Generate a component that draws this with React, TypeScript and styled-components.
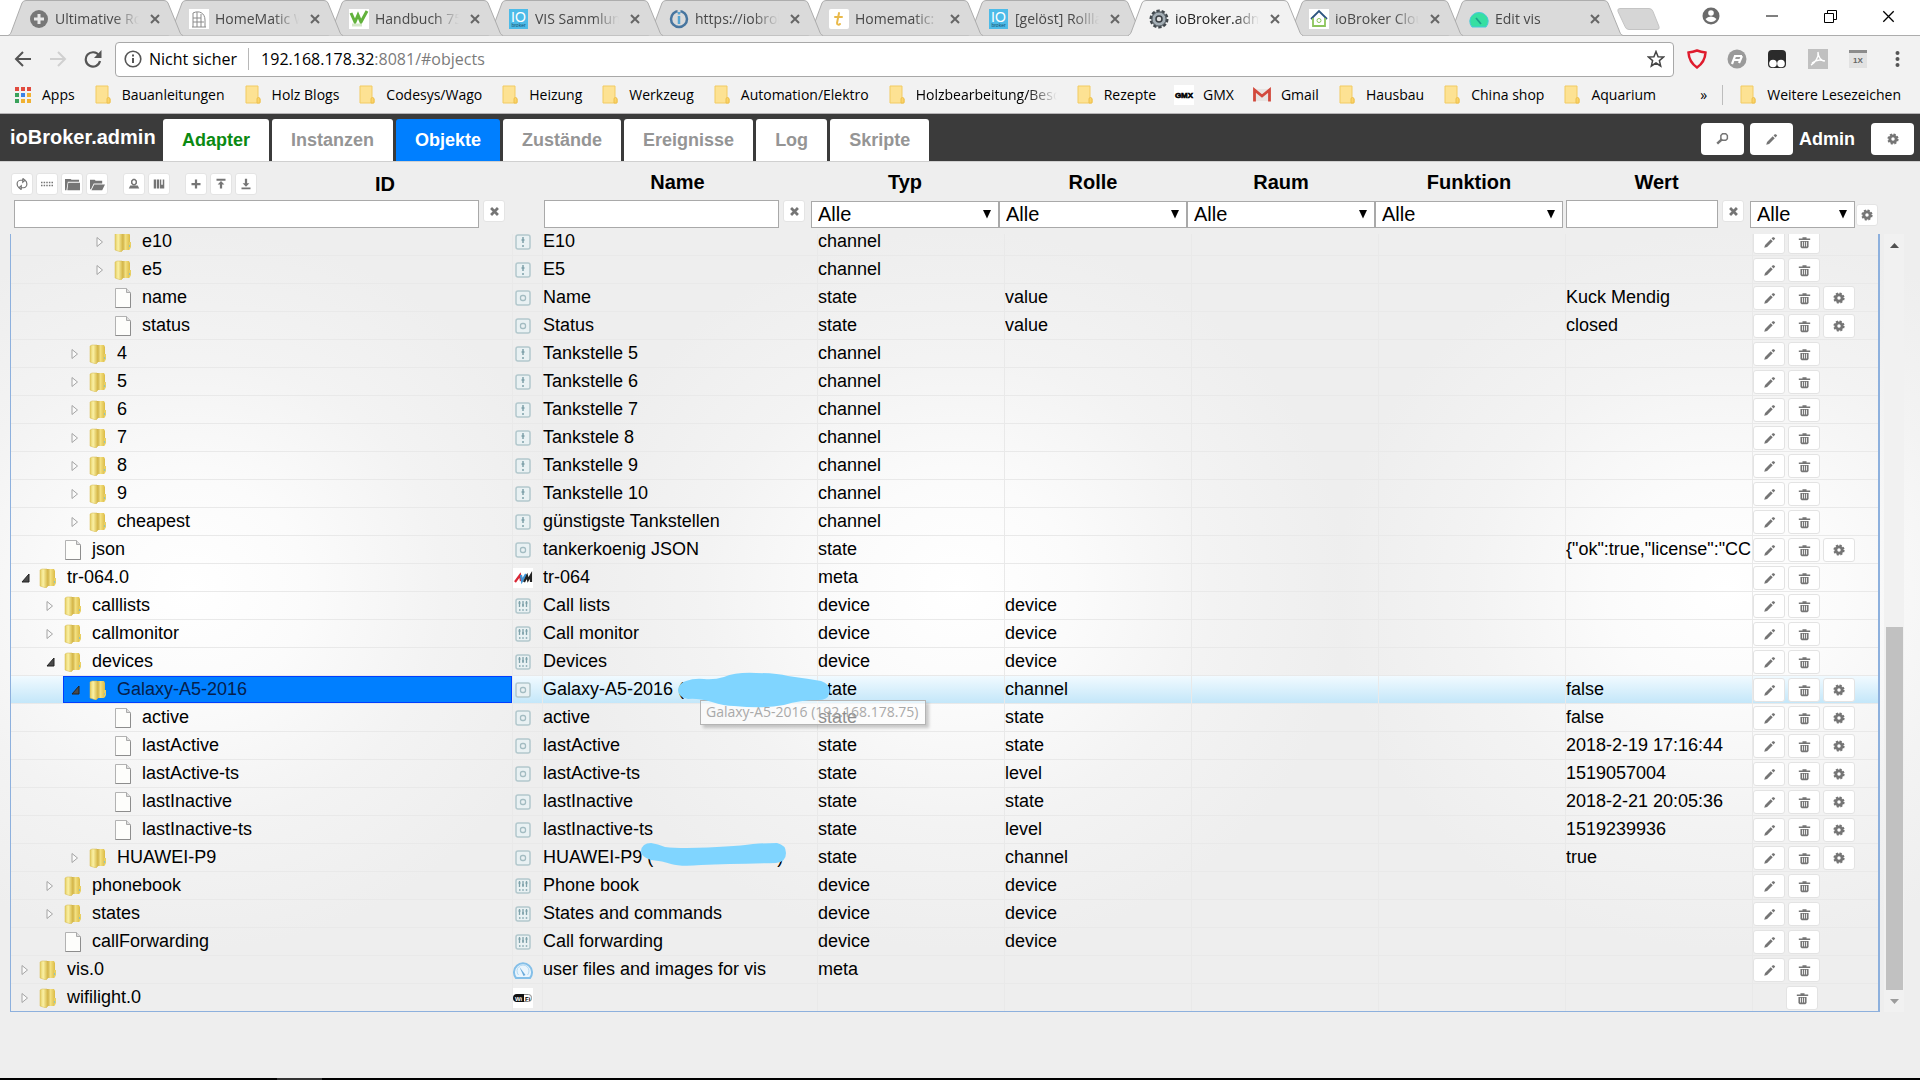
import React from "react";
import styled, { createGlobalStyle, css } from "styled-components";

const ui = '"Open Sans", "Noto Sans", sans-serif';
const arial = '"Liberation Sans", Arial, sans-serif';

const Global = createGlobalStyle`
  * { box-sizing: border-box; }
  html, body { margin: 0; height: 100%; background: #eeeeee; }
  body { font-family: ${arial}; font-size: 18px; color: #000; overflow: hidden; }
  button { font: inherit; color: inherit; padding: 0; border: 0; background: none; }
  a { color: inherit; text-decoration: none; }
  svg { display: block; flex: none; }
`;

const Page = styled.div`
  display: flex;
  flex-direction: column;
  min-height: 100vh;
`;

/* ---------- browser chrome ---------- */

const TabStrip = styled.div`
  display: flex;
  height: 36px;
  padding-left: 8px;
  background: #fff;
  border-bottom: 1px solid #adadad;
  font-family: ${ui};
  font-size: 14px;
`;

const TabBox = styled.div<{ $active?: boolean; $z: number }>`
  position: relative;
  z-index: ${(p) => (p.$active ? 30 : p.$z)};
  display: flex;
  align-items: center;
  gap: 6px;
  width: 175px;
  height: 36px;
  margin-right: -15px;
  padding: 1px 18px 0 21px;
  color: ${(p) => (p.$active ? "#222" : "#484848")};
`;

const TabShape = styled.svg`
  position: absolute;
  inset: 0;
  z-index: -1;
`;

const TabTitle = styled.a`
  flex: 1;
  height: 20px;
  line-height: 20px;
  overflow: hidden;
  white-space: nowrap;
  mask-image: linear-gradient(90deg, #000 70%, transparent 100%);
`;

const CloseTab = styled.button`
  display: grid;
  place-items: center;
  width: 20px;
  height: 20px;
`;

const NewTab = styled.button`
  width: 44px;
  height: 22px;
  margin: 8px 0 0 9px;
`;

const WindowControls = styled.div`
  display: flex;
  align-items: center;
  margin-left: auto;
  padding-right: 3px;
  height: 32px;
`;

const WindowButton = styled.button<{ $wide?: boolean }>`
  display: grid;
  place-items: center;
  width: ${(p) => (p.$wide ? 64 : 58)}px;
  height: 32px;
`;

const NavBar = styled.div`
  display: flex;
  align-items: center;
  height: 43px;
  padding: 3px 12px 0 8px;
  background: #f2f2f2;
  font-family: ${ui};
  font-size: 16px;
`;

const NavButton = styled.button`
  display: grid;
  place-items: center;
  width: 30px;
  height: 30px;
  margin-right: 5px;
`;

const Omnibox = styled.div`
  display: flex;
  align-items: center;
  flex: 1;
  height: 35px;
  margin-left: 2px;
  padding: 0 8px;
  background: #fff;
  border: 1px solid #a8a8a8;
  border-radius: 4px;
`;

const Secure = styled.span`
  margin-left: 7px;
  padding-right: 11px;
  border-right: 1px solid #b8b8b8;
`;

const Url = styled.div`
  flex: 1;
  padding-left: 12px;
  color: #7b7b7b;
  b { font-weight: 400; color: #000; }
`;

const Extensions = styled.div`
  display: flex;
  align-items: center;
  justify-content: space-between;
  width: 234px;
  padding-left: 13px;
`;

const ExtButton = styled.button`
  display: grid;
  place-items: center;
  width: 20px;
  height: 24px;
`;

const Bookmarks = styled.nav`
  display: flex;
  align-items: center;
  height: 35px;
  padding: 0 19px 3px 13px;
  gap: 18px;
  background: #f2f2f2;
  border-bottom: 1px solid #b6b4b6;
  font-family: ${ui};
  font-size: 14px;
`;

const Bookmark = styled.a<{ $faded?: boolean }>`
  display: flex;
  align-items: center;
  gap: 9px;
  white-space: nowrap;
  ${(p) =>
    p.$faded &&
    css`
      width: 170px;
      overflow: hidden;
      mask-image: linear-gradient(90deg, #000 82%, transparent 100%);
    `}
`;

const BookmarkEnd = styled.div`
  display: flex;
  align-items: center;
  gap: 15px;
  margin-left: auto;
`;

const Divider = styled.span`
  width: 1px;
  height: 20px;
  background: #bdbdbd;
`;

/* ---------- ioBroker header ---------- */

const AdminBar = styled.header`
  display: flex;
  height: 48px;
  padding: 0 6px 0 10px;
  background: #3b3b3b;
  border-bottom: 1px solid #d0d0d0;
  font-weight: 700;
`;

const Brand = styled.h1`
  margin: 0;
  width: 153px;
  font-size: 20px;
  line-height: 46px;
  color: #fff;
`;

const MenuTabs = styled.nav`
  display: flex;
  gap: 3px;
  padding-top: 5px;
`;

const MenuTab = styled.a<{ $tone?: "green" | "active" }>`
  padding: 0 19px;
  line-height: 42px;
  border-radius: 3px 3px 0 0;
  background: ${(p) => (p.$tone === "active" ? "#007fff" : "#fff")};
  color: ${(p) => (p.$tone === "active" ? "#fff" : p.$tone === "green" ? "#0b8a12" : "#959595")};
`;

const AdminTools = styled.div`
  display: flex;
  align-items: center;
  gap: 6px;
  margin-left: auto;
  padding-top: 3px;
  color: #fff;
`;

const AdminButton = styled.button`
  display: grid;
  place-items: center;
  width: 43px;
  height: 32px;
  background: #fff;
  border-radius: 4px;
`;

const User = styled.span`
  padding-right: 10px;
`;

/* ---------- object browser ---------- */

const Main = styled.main`
  flex: 1;
  padding: 6px 0 0;
  background: radial-gradient(390px 360px at 50% 428px, #ffffff 0, #fbfbfb 30%, #f3f3f3 65%, #eeeeee 100%) -194px 0 / 768px
    100% repeat-x;
`;

const FilterHead = styled.div`
  display: grid;
  grid-template-columns: 1fr 267px repeat(4, 188px) 187px 128px;
  grid-template-rows: 32px 28px;
  padding: 0 42px 6px 14px;
  font-size: 20px;
`;

const HeadTitle = styled.div`
  flex: 1;
  line-height: 29px;
  text-align: center;
  font-weight: 700;
`;

const IdHead = styled.div`
  display: flex;
  align-items: center;
  padding-right: 31px;
  margin-left: -3px;
`;

const ToolGroup = styled.div`
  display: flex;
  gap: 3px;
  margin-right: 15px;
  &:nth-of-type(3) { margin-right: 0; }
`;

const MiniButton = styled.button`
  display: grid;
  place-items: center;
  flex: none;
  width: 22px;
  height: 22px;
  background: #fff;
  border: 1px solid #e4e4e4;
  border-radius: 3px;
`;

const FilterCell = styled.div<{ $inset?: boolean; $end?: number }>`
  display: flex;
  gap: 4px;
  padding-left: ${(p) => (p.$inset ? 3 : 0)}px;
  padding-right: ${(p) => p.$end ?? 0}px;
`;

const TextFilter = styled.input`
  flex: 1;
  min-width: 0;
  height: 28px;
  padding: 0 6px;
  font: inherit;
  background: #fff;
  border: 1px solid #a9a9a9;
`;

const SelectWrap = styled.label`
  position: relative;
  align-self: end;
  flex: 1;
  height: 27px;
  svg { position: absolute; right: 8px; top: 9px; pointer-events: none; }
`;

const Select = styled.select`
  appearance: none;
  display: block;
  width: 100%;
  height: 27px;
  padding: 0 6px 1px;
  font: inherit;
  line-height: 24px;
  color: #000;
  background: #fff;
  border: 1px solid #a9a9a9;
  border-radius: 0;
`;

const GearSlot = styled.div`
  align-self: end;
  display: flex;
  margin: 0 0 2px -3px;
`;

const Browser = styled.div`
  display: flex;
  height: calc(100vh - 302px);
  padding: 0 16px 0 10px;
`;

const Viewport = styled.div`
  display: flex;
  flex-direction: column;
  justify-content: flex-end;
  flex: 1;
  overflow: hidden;
  border: solid #8db0dd;
  border-width: 0 2px 1px 1px;
`;

const Tree = styled.table`
  flex: none;
  width: 100%;
  table-layout: fixed;
  border-collapse: separate;
  border-spacing: 0;
`;

const Row = styled.tr<{ $selected?: boolean }>`
  height: 28px;
  &:last-child { height: 27px; }
  ${(p) =>
    p.$selected &&
    css`
      background: linear-gradient(#f1faff, #c2e6f9);
      box-shadow: 0 -1px 0 #b4def2;
    `}
`;

const Cell = styled.td<{ $plain?: boolean; $above?: boolean }>`
  position: relative;
  z-index: ${(p) => (p.$above ? 2 : "auto")};
  height: inherit;
  padding: 0;
  line-height: 26px;
  vertical-align: top;
  white-space: nowrap;
  overflow: ${(p) => (p.$above ? "visible" : "hidden")};
  border-left: ${(p) => (p.$plain ? "0" : "1px solid #e9e9e9")};
  border-bottom: 1px solid #e9e9e9;
  tr:last-child > & { border-bottom: 0; }
`;

const NodeLine = styled.div<{ $level: number }>`
  display: flex;
  align-items: center;
  height: 27px;
  padding-left: ${(p) => p.$level * 25 + 2}px;
`;

const NodeTitle = styled.div<{ $selected?: boolean }>`
  display: flex;
  align-items: center;
  flex: 1;
  height: 27px;
  line-height: 25px;
  padding-left: 3px;
  border: 1px solid transparent;
  ${(p) =>
    p.$selected &&
    css`
      background: #007fff;
      border-color: #003eff;
      color: #06204c;
    `}
`;

const Expander = styled.button`
  display: grid;
  place-items: center;
  width: 16px;
  height: 20px;
  margin-right: 5px;
`;

const NodeSpace = styled.span`
  width: 21px;
`;

const NodeText = styled.span`
  margin-left: 9px;
`;

const TypeIcon = styled.div`
  display: grid;
  place-items: center;
  height: 27px;
  padding-right: 9px;
`;

const Actions = styled.div`
  display: flex;
  gap: 3px;
  height: 27px;
  padding-top: 2px;
`;

const ActionSpace = styled.span`
  width: 30px;
`;

const ActionButton = styled.button`
  display: grid;
  place-items: center;
  width: 32px;
  height: 24px;
  background: #fff;
  border: 1px solid #e3e3e3;
  border-radius: 3px;
`;

const Smudge = styled.svg<{ $x: number; $y: number }>`
  position: absolute;
  left: ${(p) => p.$x}px;
  top: ${(p) => p.$y}px;
`;

const HiddenPart = styled.span`
  display: inline-block;
  width: 124px;
`;

const Tooltip = styled.div`
  position: absolute;
  left: 157px;
  top: 24px;
  height: 25px;
  padding: 0 7px 0 5px;
  line-height: 22px;
  font-family: ${ui};
  font-size: 14px;
  color: #a9a9a9;
  background: rgba(255, 255, 255, 0.55);
  border: 1px solid #b4b4b4;
  box-shadow: 3px 3px 3px rgba(0, 0, 0, 0.2);
`;

const Scroll = styled.div`
  display: flex;
  flex-direction: column;
  align-items: center;
  width: 20px;
  margin-left: 4px;
  background: #f1f1f1;
`;

const ScrollArrow = styled.button`
  display: grid;
  place-items: center;
  width: 17px;
  height: 22px;
`;

const Track = styled.div`
  display: flex;
  align-items: flex-end;
  flex: 1;
`;

const Thumb = styled.div`
  width: 17px;
  height: 49.5%;
  background: #c1c1c1;
`;

const TaskbarEdge = styled.div`
  height: 2px;
  background: linear-gradient(90deg, #000 277px, #333 277px, #333 322px, #000 322px);
`;

/* ---------- icons ---------- */

const Cross = ({ s = 9, c = "#666", w = 2 }: { s?: number; c?: string; w?: number }) => (
  <svg width={s} height={s} viewBox="0 0 10 10" stroke={c} strokeWidth={w} fill="none">
    <path d="M1 1l8 8M9 1l-8 8" />
  </svg>
);

const FolderMark = () => (
  <svg width="20" height="20" viewBox="0 0 20 20">
    <path d="M3 1h12v12l2 1v4H3z" fill="#fde293" stroke="#f2cb62" />
    <path d="M14 18v-4a1.500 1.500 0 0 1 3 0v3a1 1 0 0 1-1 1z" fill="#fbd469" stroke="#edc04f" />
  </svg>
);

const AppsMark = () => (
  <svg width="20" height="20" viewBox="0 0 20 20">
    {["#e14b3e", "#e14b3e", "#e14b3e", "#3aa25b", "#3b82e6", "#f0b132", "#3aa25b", "#f0b132", "#f0b132"].map((c, i) => (
      <rect key={i} x={2 + (i % 3) * 6} y={2 + Math.floor(i / 3) * 6} width="4" height="4" fill={c} />
    ))}
  </svg>
);

const GmxMark = () => (
  <svg width="20" height="20" viewBox="0 0 20 20">
    <rect width="20" height="20" fill="#fff" />
    <text x="10" y="13" fontSize="8" fontWeight="900" fontFamily="Liberation Sans" textAnchor="middle" stroke="#000" strokeWidth=".6">GMX</text>
  </svg>
);

const GmailMark = () => (
  <svg width="20" height="20" viewBox="0 0 20 20">
    <path d="M3 4h14v12H3z" fill="#e8e4e2" />
    <path d="M2.500 16.500V5l7.500 6 7.500-6v11.500" fill="none" stroke="#d2493c" strokeWidth="2.800" />
  </svg>
);

const Fav = ({ kind }: { kind: string }) => (
  <svg width="20" height="20" viewBox="0 0 20 20">
    {kind === "plus" && (<><circle cx="10" cy="10" r="9" fill="#777" /><path d="M10 5v10M5 10h10" stroke="#e8e8e8" strokeWidth="3" /></>)}
    {kind === "homematic" && (<><rect width="20" height="20" fill="#fff" /><path d="M4 18V4M4 4c6-3 12 0 12 7v7M8 18V3M12 18V5M4 9h8M4 13h11M3 18h14" fill="none" stroke="#8a8a8a" /></>)}
    {kind === "handbuch" && (<><rect width="20" height="20" fill="#fff" /><path d="M2 4l4 9 3-7 3 7 6-11" fill="none" stroke="#62b23c" strokeWidth="3" /><path d="M3 16h10" stroke="#d5e8c9" strokeWidth="3" /></>)}
    {kind === "io" && (<><rect width="19" height="20" fill="#4dbbe8" /><text x="9.500" y="13" fontSize="14" textAnchor="middle" fill="#fff" fontFamily="Liberation Sans">IO</text><text x="9.500" y="18" fontSize="5" textAnchor="middle" fill="#164f6d" fontFamily="Liberation Sans">broker</text></>)}
    {kind === "info" && (<><circle cx="10" cy="10" r="8" fill="none" stroke="#47759f" strokeWidth="2.500" /><path d="M10 0v3" stroke="#dadada" strokeWidth="3" /><path d="M10 7v8M10 3v2.500" stroke="#55a4d2" strokeWidth="2.500" /></>)}
    {kind === "tapatalk" && (<><rect width="20" height="20" rx="2" fill="#fff" /><path d="M10 4L8 14c0 2 2 2 3 1M6 8h7" fill="none" stroke="#e9b949" strokeWidth="2" strokeLinecap="round" /></>)}
    {kind === "gear" && (<><circle cx="10" cy="10" r="8" fill="#8d969d" stroke="#41474c" strokeWidth="3" strokeDasharray="3.200 1.800" /><circle cx="10" cy="10" r="7" fill="#a5afb6" stroke="#5a6268" /><circle cx="10" cy="10" r="3" fill="#e0e0e0" stroke="#3a3f44" strokeWidth="1.500" /></>)}
    {kind === "cloud" && (<><rect width="20" height="20" fill="#fff" /><path d="M2 10l8-8 8 8" fill="none" stroke="#2d5580" strokeWidth="1.800" /><path d="M4 9v8h12V9" fill="none" stroke="#8cc55b" strokeWidth="1.800" /><circle cx="10" cy="11.500" r="2" fill="none" stroke="#8cc55b" /></>)}
    {kind === "vis" && (<><path d="M3 18A9.200 8.800 0 1 1 17 18z" fill="#36dfa2" stroke="#46c8dc" /><path d="M7 9l5 6" stroke="#1c9f8c" strokeWidth="1.800" /></>)}
  </svg>
);

const Glyph = ({ name, size = 14, color = "#757575" }: { name: string; size?: number; color?: string }) => (
  <svg width={size} height={size} viewBox="0 0 16 16" fill={color} stroke="none">
    {name === "pencil" && <path d="M1.500 14.500l1-3.500 7-7 2.500 2.500-7 7zM10.500 3l1.500-1.500h1.500L15 3l-2 2.500z" />}
    {name === "trash" && (<><path d="M1 3h4.500V1.500h5V3H15v2H1z" /><path d="M3 6h10v7.500L11.500 15h-7L3 13.500zM5 7v6h1V7zm2.500 0v6h1V7zM10 7v6h1V7z" fillRule="evenodd" /></>)}
    {name === "gear" && (<><circle cx="8" cy="8" r="6" fill="none" stroke={color} strokeWidth="3" strokeDasharray="2.700 2.010" /><circle cx="8" cy="8" r="4.200" fill="none" stroke={color} strokeWidth="3.800" /></>)}
    {name === "search" && (<><path d="M6 3l2-2h4l2 2v4l-2 2H8L6 7z" fill="none" stroke={color} strokeWidth="1.800" /><path d="M7 8l-5.500 5" stroke={color} strokeWidth="3" /></>)}
    {name === "close" && <path d="M3 3l10 10M13 3L3 13" stroke={color} strokeWidth="4" />}
    {name === "refresh" && <path d="M9 .500v5L12 3 9 .500M9 3H6C3 3 1.500 6 1.500 8s1 4 2.500 5M7 15.500v-5L4 13l3 2.500M7 13h3c3 0 4.500-3 4.500-5s-1-4-2.500-5" fill="none" stroke={color} strokeWidth="1.600" />}
    {name === "lines" && <path d="M0 6h16M0 10h16" stroke={color} strokeWidth="2" strokeDasharray="2 1.500" />}
    {name === "folder" && <path d="M0 2h6l1 1h8v2H3L1.500 14H0zM3.500 6H16v8H2.500z" />}
    {name === "folderOpen" && <path d="M0 3h5l1 1h7v3H4l-3 6H0zM4.500 8H16l-3 6H1.500z" />}
    {name === "person" && (<><path d="M5 4l2-2h2l2 2v3L9 9H7L5 7z" fill="none" stroke={color} strokeWidth="2" /><path d="M1 14l2-4h10l2 4z" /></>)}
    {name === "columns" && <path d="M1 2h3v12H1zM5 2h3v12H5zM9 2h6v12H9zM11 2v7h2V2z" fillRule="evenodd" />}
    {name === "plus" && <path d="M6.500 2h3v4.500H14v3H9.500V14h-3V9.500H2v-3h4.500z" />}
    {name === "up" && <path d="M2 1h12v2.500H2zM8 4l4.500 4.500h-3V14h-3V8.500h-3z" />}
    {name === "down" && <path d="M2 12.500h12V15H2zM8 11.500L3.500 7h3V1h3v6h3z" />}
  </svg>
);

const TreeFolder = () => (
  <svg width="20" height="20" viewBox="0 0 20 20">
    <defs>
      <linearGradient id="fl" x1="0" x2="1"><stop offset="0" stopColor="#e3cc62" /><stop offset=".4" stopColor="#fbf1a4" /><stop offset="1" stopColor="#d3b341" /></linearGradient>
      <linearGradient id="fr" x1="0" x2="1"><stop offset="0" stopColor="#b8942c" /><stop offset=".5" stopColor="#f3e080" /><stop offset="1" stopColor="#dcbb45" /></linearGradient>
    </defs>
    <path d="M8 1h8l1 2v14l-1 1H8z" fill="url(#fr)" />
    <path d="M2 2l2-1h5l1 2v15l-2 2-6-2z" fill="url(#fl)" stroke="#d6bb52" strokeWidth=".5" />
    <path d="M16 10h2v5l-1 2h-1z" fill="#e8cf62" />
    <path d="M16.500 13v2" stroke="#8dc3bc" />
  </svg>
);

const TreeFile = () => (
  <svg width="20" height="20" viewBox="0 0 20 20">
    <path d="M2.500 .500h11l4 4v15h-15z" fill="#fdfdfb" stroke="#b2b2b2" />
    <path d="M13.500 .500v4h4" fill="#ddd" stroke="#aaa" />
    <path d="M2.500 19.500h15v-14" fill="none" stroke="#8d8d8d" />
  </svg>
);

const Kind = ({ k }: { k: string }) => {
  if (k === "avm")
    return (
      <svg width="20" height="20" viewBox="0 0 20 20">
        <rect width="20" height="20" fill="#fff" />
        <path d="M2 14l5-7 1 6" fill="none" stroke="#d92635" strokeWidth="2.200" />
        <path d="M8 7l1 6 4-7" fill="none" stroke="#3e93d6" strokeWidth="2.200" />
        <path d="M11 14l3-6 1 4 3-5v7" fill="none" stroke="#222" strokeWidth="2.200" />
      </svg>
    );
  if (k === "gauge")
    return (
      <svg width="20" height="20" viewBox="0 0 20 20">
        <path d="M3 18A9 9 0 1 1 17 18z" fill="#eaf5fd" stroke="#84bfe8" strokeWidth="2" />
        <path d="M5.500 15A6 6 0 1 1 14.500 15" fill="none" stroke="#b2d9f3" />
        <path d="M6.500 7l6 8-2 1z" fill="#68aadb" />
      </svg>
    );
  if (k === "wifi")
    return (
      <svg width="20" height="20" viewBox="0 0 20 20">
        <rect width="20" height="20" fill="#fff" />
        <rect x="1.500" y="6.500" width="17" height="7" rx="3" fill="#fff" stroke="#888" />
        <path d="M4 6h7v8H4a3 3 0 0 1 0-8z" fill="#111" />
        <text x="2" y="12.500" fontSize="6" fontWeight="700" fill="#fff" fontFamily="Liberation Sans">Wi</text>
        <text x="12" y="12.500" fontSize="6" fontWeight="700" fontFamily="Liberation Sans">Fi</text>
      </svg>
    );
  return (
    <svg width="16" height="16" viewBox="0 0 16 16" fill="none" stroke="#7fa1aa">
      <rect x="1" y="1" width="14" height="14" rx="2" fill="#e9f1f3" stroke="#b3c8cd" strokeWidth="1.500" />
      {k === "state" && <rect x="5.500" y="5.500" width="5" height="5" rx="2" stroke="#a3bcc2" strokeWidth="1.300" />}
      {k === "channel" && <><path d="M8 3v6M8 11v2" strokeWidth="1.500" /><path d="M6.500 6h3" strokeWidth="1.500" /></>}
      {k === "device" && <><path d="M4.500 3v6M8 3v6M11.500 3v6M4 12h1.500M7.250 12h1.500M10.750 12h1.500" strokeWidth="1.300" /><path d="M3.500 5h2M7 7h2M10.500 5h2" strokeWidth="1.500" /></>}
    </svg>
  );
};

const Arrow = ({ open }: { open: boolean }) =>
  open ? (
    <svg width="9" height="10" viewBox="0 0 9 10"><path d="M8 1v8H1z" fill="#4a4a4a" stroke="#222" /></svg>
  ) : (
    <svg width="10" height="12" viewBox="0 0 10 12"><path d="M2 1.500v9L7.500 6z" fill="#fafafa" stroke="#a4a4a4" /></svg>
  );

/* ---------- data ---------- */

const tabs = [
  ["plus", "Ultimative Rollladen"],
  ["homematic", "HomeMatic Wiki"],
  ["handbuch", "Handbuch 759"],
  ["io", "VIS Sammlung"],
  ["info", "https://iobroker"],
  ["tapatalk", "Homematic: Ro"],
  ["io", "[gelöst] Rollladen"],
  ["gear", "ioBroker.admin"],
  ["cloud", "ioBroker Cloud"],
  ["vis", "Edit vis"],
];

const bookmarks = ["Apps", "Bauanleitungen", "Holz Blogs", "Codesys/Wago", "Heizung", "Werkzeug", "Automation/Elektro", "Holzbearbeitung/Besch", "Rezepte", "GMX", "Gmail", "Hausbau", "China shop", "Aquarium"];

const menu: [string, ("green" | "active")?][] = [["Adapter", "green"], ["Instanzen"], ["Objekte", "active"], ["Zustände"], ["Ereignisse"], ["Log"], ["Skripte"]];

type Node = [level: number, mark: "c" | "o" | "f", id: string, icon: string, name: string, type: string, role?: string, value?: string];

const nodes: Node[] = [
  [3, "c", "e10", "channel", "E10", "channel"],
  [3, "c", "e5", "channel", "E5", "channel"],
  [3, "f", "name", "state", "Name", "state", "value", "Kuck Mendig"],
  [3, "f", "status", "state", "Status", "state", "value", "closed"],
  [2, "c", "4", "channel", "Tankstelle 5", "channel"],
  [2, "c", "5", "channel", "Tankstelle 6", "channel"],
  [2, "c", "6", "channel", "Tankstelle 7", "channel"],
  [2, "c", "7", "channel", "Tankstele 8", "channel"],
  [2, "c", "8", "channel", "Tankstelle 9", "channel"],
  [2, "c", "9", "channel", "Tankstelle 10", "channel"],
  [2, "c", "cheapest", "channel", "günstigste Tankstellen", "channel"],
  [1, "f", "json", "state", "tankerkoenig JSON", "state", "", '{"ok":true,"license":"CC'],
  [0, "o", "tr-064.0", "avm", "tr-064", "meta"],
  [1, "c", "calllists", "device", "Call lists", "device", "device"],
  [1, "c", "callmonitor", "device", "Call monitor", "device", "device"],
  [1, "o", "devices", "device", "Devices", "device", "device"],
  [2, "o", "Galaxy-A5-2016", "state", "Galaxy-A5-2016 (", "state", "channel", "false"],
  [3, "f", "active", "state", "active", "state", "state", "false"],
  [3, "f", "lastActive", "state", "lastActive", "state", "state", "2018-2-19 17:16:44"],
  [3, "f", "lastActive-ts", "state", "lastActive-ts", "state", "level", "1519057004"],
  [3, "f", "lastInactive", "state", "lastInactive", "state", "state", "2018-2-21 20:05:36"],
  [3, "f", "lastInactive-ts", "state", "lastInactive-ts", "state", "level", "1519239936"],
  [2, "c", "HUAWEI-P9", "state", "HUAWEI-P9 (", "state", "channel", "true"],
  [1, "c", "phonebook", "device", "Phone book", "device", "device"],
  [1, "c", "states", "device", "States and commands", "device", "device"],
  [1, "f", "callForwarding", "device", "Call forwarding", "device", "device"],
  [0, "c", "vis.0", "gauge", "user files and images for vis", "meta"],
  [0, "c", "wifilight.0", "wifi", "", ""],
];

/* ---------- parts ---------- */

const BrowserTab = ({ icon, title, active, z }: { icon: string; title: string; active: boolean; z: number }) => (
  <TabBox $active={active} $z={z}>
    <TabShape width="175" height="36" viewBox="0 0 175 36">
      <path d="M0 35.500C2 35 3 33 4 30L14 3Q15 .500 18 .500H156Q159 .500 160 3L171 30C172 33 173 35 175 35.500" fill={active ? "#f2f2f2" : "#dadada"} stroke="#adadad" />
      {active && <path d="M1 35.500h173" stroke="#f2f2f2" />}
    </TabShape>
    <Fav kind={icon} />
    <TabTitle href="#">{title}</TabTitle>
    <CloseTab aria-label={`${title} schließen`}><Cross s={10} /></CloseTab>
  </TabBox>
);

const AllSelect = ({ label }: { label: string }) => (
  <SelectWrap>
    <Select aria-label={label}><option>Alle</option></Select>
    <svg width="8" height="9" viewBox="0 0 8 9"><path d="M0 0h8L4 8.500z" /></svg>
  </SelectWrap>
);

const ClearableFilter = ({ label }: { label: string }) => (
  <>
    <TextFilter type="text" aria-label={label} />
    <MiniButton aria-label={`${label} leeren`}><Glyph name="close" size={11} /></MiniButton>
  </>
);

const TreeRow = ({ node }: { node: Node }) => {
  const [level, mark, id, icon, name, type, role, value] = node;
  const selected = id === "Galaxy-A5-2016";
  const huawei = id === "HUAWEI-P9";
  return (
    <Row $selected={selected}>
      <Cell $plain>
        <NodeLine $level={level}>
          <NodeTitle $selected={selected}>
            {mark === "f" ? <NodeSpace /> : <Expander aria-label={`${id} umschalten`}><Arrow open={mark === "o"} /></Expander>}
            {mark === "f" ? <TreeFile /> : <TreeFolder />}
            <NodeText>{id}</NodeText>
          </NodeTitle>
        </NodeLine>
      </Cell>
      <Cell><TypeIcon><Kind k={icon} /></TypeIcon></Cell>
      <Cell $above={selected || huawei}>
        {name}
        {huawei && <><HiddenPart />)</>}
        {selected && <Tooltip role="tooltip">Galaxy-A5-2016 (192.168.178.75)</Tooltip>}
        {selected && (
          <Smudge $x={135} $y={-4} width="153" height="36" viewBox="0 0 153 36">
            <path d="M8 9Q16 6 26 7Q36 8 46 5Q58 0 78 1Q98 1 110 4Q132 7 143 9Q154 13 151 22Q150 28 140 28Q122 28 106 33Q86 37 56 34Q46 34 34 30Q20 26 10 27Q0 25 0 18Q1 11 8 9Z" fill="#80d5ff" />
          </Smudge>
        )}
        {huawei && (
          <Smudge $x={98} $y={-1} width="146" height="24" viewBox="0 0 146 24">
            <path d="M10 0Q17 1 24 4Q32 5 46 5Q90 4 112 1Q126 0 136 0Q145 2 145 10Q145 19 135 20Q90 21 60 22Q40 24 30 21Q22 18 10 17Q0 14 0 8Q1 0 10 0Z" fill="#80d5ff" />
          </Smudge>
        )}
      </Cell>
      <Cell>{type}</Cell>
      <Cell>{role}</Cell>
      <Cell />
      <Cell />
      <Cell>{value}</Cell>
      <Cell>
        <Actions>
          {type ? <ActionButton aria-label="Bearbeiten"><Glyph name="pencil" size={13} /></ActionButton> : <ActionSpace />}
          <ActionButton aria-label="Löschen"><Glyph name="trash" size={13} /></ActionButton>
          {value && <ActionButton aria-label="Einstellungen"><Glyph name="gear" size={12} /></ActionButton>}
        </Actions>
      </Cell>
    </Row>
  );
};

export default function App() {
  return (
    <Page>
      <Global />
      <TabStrip>
        {tabs.map(([icon, title], i) => (
          <BrowserTab key={i} icon={icon} title={title} active={i === 7} z={20 - i} />
        ))}
        <NewTab aria-label="Neuer Tab">
          <svg width="44" height="22" viewBox="0 0 44 22"><path d="M3 .500h29q3 0 4 3l6 15q1 3-2 3H12q-3 0-4-3L1 3.500Q0 .500 3 .500z" fill="#d6d6d6" stroke="#c4c4c4" /></svg>
        </NewTab>
        <WindowControls>
          <WindowButton $wide aria-label="Profil">
            <svg width="18" height="18" viewBox="0 0 18 18"><circle cx="9" cy="9" r="8.500" fill="#6b6b6b" /><circle cx="9" cy="6" r="2.800" fill="#fff" /><path d="M3.500 12q2-2.500 5.500-2.500t5.500 2.500q-2 3-5.500 3T3.500 12z" fill="#fff" /></svg>
          </WindowButton>
          <WindowButton aria-label="Minimieren"><svg width="12" height="2"><path d="M0 1h12" stroke="#000" /></svg></WindowButton>
          <WindowButton aria-label="Verkleinern">
            <svg width="13" height="13" viewBox="0 0 13 13" fill="none" stroke="#000"><path d="M.500 3.500h9v9h-9zM3.500 3V.500h9v9H10" /></svg>
          </WindowButton>
          <WindowButton aria-label="Schließen"><Cross s={13} c="#000" w={1} /></WindowButton>
        </WindowControls>
      </TabStrip>

      <NavBar>
        <NavButton aria-label="Zurück"><svg width="18" height="18" viewBox="0 0 18 18" fill="none" stroke="#555" strokeWidth="2"><path d="M17 9H2M9 2L2 9l7 7" /></svg></NavButton>
        <NavButton aria-label="Vorwärts"><svg width="18" height="18" viewBox="0 0 18 18" fill="none" stroke="#d0d0d0" strokeWidth="2"><path d="M1 9h15M9 2l7 7-7 7" /></svg></NavButton>
        <NavButton aria-label="Neu laden"><svg width="18" height="18" viewBox="0 0 18 18"><path d="M15 5.500A7.200 7.200 0 1 0 16 11" fill="none" stroke="#555" strokeWidth="2.200" /><path d="M17.500 0v8H10z" fill="#555" /></svg></NavButton>
        <Omnibox>
          <svg width="18" height="18" viewBox="0 0 18 18" fill="none" stroke="#555" strokeWidth="1.600"><circle cx="9" cy="9" r="7.800" /><path d="M9 8v5M9 4.500v2" strokeWidth="2" /></svg>
          <Secure>Nicht sicher</Secure>
          <Url><b>192.168.178.32</b>:8081/#objects</Url>
          <svg width="18" height="18" viewBox="0 0 18 18" fill="none" stroke="#444" strokeWidth="1.500"><path d="M9 1.500l2.100 5.200 5.500.300-4.200 3.600 1.300 5.400L9 13l-4.700 3 1.300-5.400L1.400 7l5.500-.300z" /></svg>
        </Omnibox>
        <Extensions>
          <ExtButton aria-label="Schutz"><svg width="20" height="20" viewBox="0 0 20 20"><path d="M10 1.500Q14 3 18.500 3.500 18 13 10 18.500 2 13 1.500 3.500 6 3 10 1.500z" fill="none" stroke="#df1b2d" strokeWidth="2.500" /></svg></ExtButton>
          <ExtButton aria-label="Erweiterung"><svg width="20" height="20" viewBox="0 0 20 20"><circle cx="10" cy="10" r="9.500" fill="#9a9a9a" /><path d="M5 15l3-8h7M7 11h6M12 14l3-7" fill="none" stroke="#fff" strokeWidth="2.200" /></svg></ExtButton>
          <ExtButton aria-label="Skripte"><svg width="20" height="20" viewBox="0 0 20 20"><rect x="1" y="1" width="18" height="18" rx="4" fill="#2b2b2b" /><circle cx="6" cy="14.500" r="3.800" fill="#fff" /><circle cx="14" cy="14.500" r="3.800" fill="#fff" /></svg></ExtButton>
          <ExtButton aria-label="PDF"><svg width="20" height="20" viewBox="0 0 20 20"><rect width="20" height="20" fill="#c0c0c0" /><path d="M3 16c4-2 8-8 7-13M10 3c0 5 3 9 7 9M4 14c4-3 8-4 12-2" fill="none" stroke="#fff" strokeWidth="1.400" /></svg></ExtButton>
          <ExtButton aria-label="Zoom"><svg width="20" height="20" viewBox="0 0 20 20"><rect x="1" y="2" width="18" height="17" fill="#e2e2e2" /><rect x="1" y="1" width="18" height="3" fill="#8c8c8c" /><text x="10" y="14" fontSize="8" fontWeight="700" textAnchor="middle" fill="#666" fontFamily="Liberation Sans">1X</text></svg></ExtButton>
          <ExtButton aria-label="Menü"><svg width="5" height="18" viewBox="0 0 5 18" fill="#555"><circle cx="2.500" cy="3" r="2" /><circle cx="2.500" cy="9" r="2" /><circle cx="2.500" cy="15" r="2" /></svg></ExtButton>
        </Extensions>
      </NavBar>

      <Bookmarks aria-label="Lesezeichen">
        {bookmarks.map((b) => (
          <Bookmark key={b} href="#" $faded={b.startsWith("Holzb")}>
            {b === "Apps" ? <AppsMark /> : b === "GMX" ? <GmxMark /> : b === "Gmail" ? <GmailMark /> : <FolderMark />}
            {b}
          </Bookmark>
        ))}
        <BookmarkEnd>
          <button aria-label="Weitere">»</button>
          <Divider />
          <Bookmark href="#"><FolderMark />Weitere Lesezeichen</Bookmark>
        </BookmarkEnd>
      </Bookmarks>

      <AdminBar>
        <Brand>ioBroker.admin</Brand>
        <MenuTabs>
          {menu.map(([label, tone]) => (
            <MenuTab key={label} href="#" $tone={tone}>{label}</MenuTab>
          ))}
        </MenuTabs>
        <AdminTools>
          <AdminButton aria-label="Suchen"><Glyph name="search" size={13} /></AdminButton>
          <AdminButton aria-label="Bearbeiten"><Glyph name="pencil" size={13} /></AdminButton>
          <User>Admin</User>
          <AdminButton aria-label="Einstellungen"><Glyph name="gear" size={12} /></AdminButton>
        </AdminTools>
      </AdminBar>

      <Main>
        <FilterHead>
          <IdHead>
            {[["refresh", "lines", "folder", "folderOpen"], ["person", "columns"], ["plus", "up", "down"]].map((g, i) => (
              <ToolGroup key={i}>
                {g.map((n) => (
                  <MiniButton key={n} aria-label={n}><Glyph name={n} size={n === "folder" || n === "folderOpen" ? 15 : 12} /></MiniButton>
                ))}
              </ToolGroup>
            ))}
            <HeadTitle>ID</HeadTitle>
          </IdHead>
          <HeadTitle>Name</HeadTitle>
          <HeadTitle>Typ</HeadTitle>
          <HeadTitle>Rolle</HeadTitle>
          <HeadTitle>Raum</HeadTitle>
          <HeadTitle>Funktion</HeadTitle>
          <HeadTitle>Wert</HeadTitle>
          <span />
          <FilterCell $end={39}><ClearableFilter label="ID" /></FilterCell>
          <FilterCell $end={6}><ClearableFilter label="Name" /></FilterCell>
          <FilterCell><AllSelect label="Typ" /></FilterCell>
          <FilterCell><AllSelect label="Rolle" /></FilterCell>
          <FilterCell><AllSelect label="Raum" /></FilterCell>
          <FilterCell><AllSelect label="Funktion" /></FilterCell>
          <FilterCell $inset $end={6}><ClearableFilter label="Wert" /></FilterCell>
          <FilterCell>
            <AllSelect label="Einstellungen" />
            <GearSlot><MiniButton aria-label="Filter einstellen"><Glyph name="gear" size={12} /></MiniButton></GearSlot>
          </FilterCell>
        </FilterHead>
        <Browser>
          <Viewport>
            <Tree aria-label="Objekte">
              <colgroup>
                <col />
                <col width="30" />
                <col width="275" />
                <col width="187" />
                <col width="187" />
                <col width="187" />
                <col width="187" />
                <col width="187" />
                <col width="126" />
              </colgroup>
              <tbody>
                {nodes.map((n) => (
                  <TreeRow key={n[2]} node={n} />
                ))}
              </tbody>
            </Tree>
          </Viewport>
          <Scroll>
            <ScrollArrow aria-label="Nach oben"><svg width="9" height="5"><path d="M0 5h9L4.500 0z" fill="#505050" /></svg></ScrollArrow>
            <Track><Thumb /></Track>
            <ScrollArrow aria-label="Nach unten"><svg width="9" height="5"><path d="M0 0h9L4.500 5z" fill="#9c9c9c" /></svg></ScrollArrow>
          </Scroll>
        </Browser>
      </Main>
      <TaskbarEdge />
    </Page>
  );
}
